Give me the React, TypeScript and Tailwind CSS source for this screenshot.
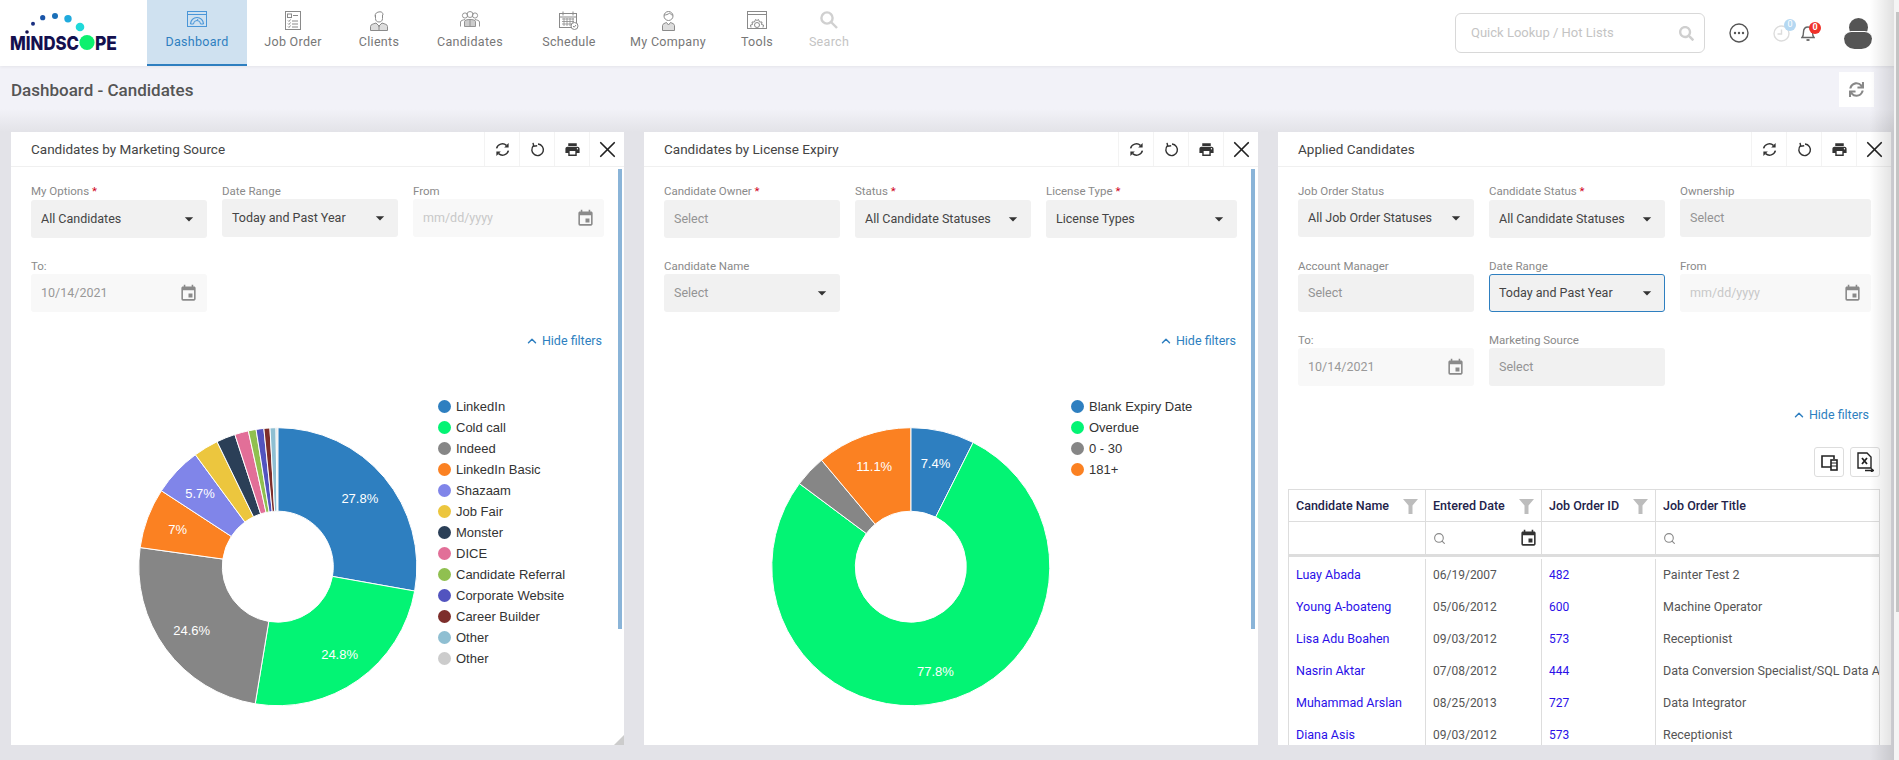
import { MdArrowDropDown, MdEvent, MdPrint } from "react-icons/md";
import { FaSearch, FaSync } from "react-icons/fa";
import { ChevronUp, Search, X } from "lucide-react";

type Slice = { name: string; value: number; color: string; label?: string };

const marketing: Slice[] = [
  { name: "LinkedIn", value: 27.8, color: "#2e7fc0", label: "27.8%" },
  { name: "Cold call", value: 24.8, color: "#03f474", label: "24.8%" },
  { name: "Indeed", value: 24.6, color: "#868686", label: "24.6%" },
  { name: "LinkedIn Basic", value: 7, color: "#fb8122", label: "7%" },
  { name: "Shazaam", value: 5.7, color: "#8085e9", label: "5.7%" },
  { name: "Job Fair", value: 2.9, color: "#ecc63e" },
  { name: "Monster", value: 2.2, color: "#2b3f57" },
  { name: "DICE", value: 1.6, color: "#e26f98" },
  { name: "Candidate Referral", value: 0.9, color: "#90c050" },
  { name: "Corporate Website", value: 0.9, color: "#5254bf" },
  { name: "Career Builder", value: 0.7, color: "#7d2e2b" },
  { name: "Other", value: 0.7, color: "#8fbfd2" },
  { name: "Other", value: 0.2, color: "#cccccc" },
];

const expiry: Slice[] = [
  { name: "Blank Expiry Date", value: 7.4, color: "#2e7fc0", label: "7.4%" },
  { name: "Overdue", value: 77.8, color: "#03f474", label: "77.8%" },
  { name: "0 - 30", value: 3.7, color: "#868686" },
  { name: "181+", value: 11.1, color: "#fb8122", label: "11.1%" },
];

const rows = [
  ["Luay Abada", "06/19/2007", "482", "Painter Test 2"],
  ["Young A-boateng", "05/06/2012", "600", "Machine Operator"],
  ["Lisa Adu Boahen", "09/03/2012", "573", "Receptionist"],
  ["Nasrin Aktar", "07/08/2012", "444", "Data Conversion Specialist/SQL Data Analyst"],
  ["Muhammad Arslan", "08/25/2013", "727", "Data Integrator"],
  ["Diana Asis", "09/03/2012", "573", "Receptionist"],
];

function Donut({ data }: { data: Slice[] }) {
  const cx = 266.8;
  const cy = 206.7;
  const R = 139;
  const r = 55.5;
  const pt = (rad: number, pct: number) => {
    const a = (pct / 100) * Math.PI * 2;
    return [cx + rad * Math.sin(a), cy - rad * Math.cos(a)];
  };
  let start = 0;
  return (
    <svg width="427" height="385" className="shrink-0 font-['Liberation_Sans',sans-serif]">
      {data.map((s, i) => {
        const end = start + s.value;
        const [x1, y1] = pt(R, start);
        const [x2, y2] = pt(R, end);
        const [x3, y3] = pt(r, end);
        const [x4, y4] = pt(r, start);
        const big = s.value > 50 ? 1 : 0;
        const [lx, ly] = pt(107, start + s.value / 2);
        start = end;
        return (
          <g key={i}>
            <path
              d={`M${x1} ${y1}A${R} ${R} 0 ${big} 1 ${x2} ${y2}L${x3} ${y3}A${r} ${r} 0 ${big} 0 ${x4} ${y4}Z`}
              fill={s.color}
              stroke="#fff"
              strokeWidth="1"
            />
            {s.label && (
              <text x={lx} y={ly + 5} textAnchor="middle" fontSize="13" fill="#fff">
                {s.label}
              </text>
            )}
          </g>
        );
      })}
    </svg>
  );
}

function Legend({ data }: { data: Slice[] }) {
  return (
    <div className="mt-[36px] flex flex-col font-['Liberation_Sans',sans-serif] text-[13px] text-[#333]">
      {data.map((s, i) => (
        <div key={i} className="flex h-[21px] items-center gap-[5px] whitespace-nowrap">
          <span className="h-[13px] w-[13px] rounded-full" style={{ backgroundColor: s.color }} />
          {s.name}
        </div>
      ))}
    </div>
  );
}

function SyncIcon() {
  return (
    <svg width="15" height="15" viewBox="0 0 15 15" fill="none" stroke="#333" strokeWidth="1.5">
      <path d="M1.6 6.4A6 6 0 0 1 11.4 3.4" />
      <path d="M13.4 8.6A6 6 0 0 1 3.6 11.6" />
      <path d="M13.6 1V5.4H9.2Z" fill="#333" stroke="none" />
      <path d="M1.4 14V9.6H5.8Z" fill="#333" stroke="none" />
    </svg>
  );
}

function RestartIcon() {
  return (
    <svg width="15" height="15" viewBox="0 0 15 15" fill="none" stroke="#333" strokeWidth="1.4">
      <path d="M8 2A5.8 5.8 0 1 1 3.6 3.6" />
      <path d="M3 0.8L3.8 4.2L7.2 3.8" />
    </svg>
  );
}

function PanelHeader({ title }: { title: string }) {
  return (
    <div className="flex h-[35px] shrink-0 items-center justify-between border-b border-[#f0f0f0] pl-[20px]">
      <span className="pt-[1px] text-[13.5px] text-[#444]">{title}</span>
      <div className="flex h-full">
        <span className="flex w-[35px] items-center justify-center border-l border-[#f3f3f3]"><SyncIcon /></span>
        <span className="flex w-[35px] items-center justify-center border-l border-[#f3f3f3]"><RestartIcon /></span>
        <span className="flex w-[35px] items-center justify-center border-l border-[#f3f3f3] text-[#333]"><MdPrint size={17} /></span>
        <span className="flex w-[35px] items-center justify-center border-l border-[#f3f3f3] text-[#222]"><X size={27} strokeWidth={1.5} /></span>
      </div>
    </div>
  );
}

function Label({ text, required }: { text: string; required?: boolean }) {
  return (
    <div className={required ? "h-[17px] text-[11.5px] leading-[17px] text-[#8a8a8a]" : "h-[16px] text-[11.5px] leading-[17px] text-[#8a8a8a]"}>
      {text}
      {required && <span className="text-[#d0021b]"> *</span>}
    </div>
  );
}

function SelectField({ label, value, required, focus, muted }: { label: string; value: string; required?: boolean; focus?: boolean; muted?: boolean }) {
  return (
    <div>
      <Label text={label} required={required} />
      <div className={focus
        ? "flex h-[38px] items-center justify-between rounded-[3px] border border-[#2e7fc0] bg-[#f1f1f1] pl-[9px] pr-[7px] text-[12.5px] text-[#444]"
        : "flex h-[38px] items-center justify-between rounded-[3px] bg-[#f1f1f1] pl-[10px] pr-[8px] text-[12.5px] text-[#444]"}>
        <span className={muted ? "pt-[1px] text-[#949494]" : "pt-[1px]"}>{value}</span>
        <MdArrowDropDown size={20} className="text-[#333]" />
      </div>
    </div>
  );
}

function MultiField({ label, required }: { label: string; required?: boolean }) {
  return (
    <div>
      <Label text={label} required={required} />
      <div className="flex h-[38px] items-center rounded-[3px] bg-[#f1f1f1] pl-[10px] pt-[1px] text-[12.5px] text-[#949494]">Select</div>
    </div>
  );
}

function DateField({ label, value }: { label: string; value: string }) {
  const empty = value === "mm/dd/yyyy";
  return (
    <div>
      <Label text={label} />
      <div className="flex h-[38px] items-center justify-between rounded-[3px] bg-[#f8f8f8] pl-[10px] pr-[9px] text-[12.5px]">
        <span className={empty ? "pt-[1px] text-[#c8c8c8]" : "pt-[1px] text-[#999]"}>{value}</span>
        <MdEvent size={19} className="text-[#8a8a8a]" />
      </div>
    </div>
  );
}

function HideFilters() {
  return (
    <div className="mt-[20px] flex h-[18px] items-center justify-end gap-[3px] pr-[22px] text-[12.5px] text-[#2e7fc0]">
      <ChevronUp size={14} strokeWidth={2.5} />
      Hide filters
    </div>
  );
}

function Funnel() {
  return (
    <svg width="15" height="15" viewBox="0 0 15 15" className="shrink-0">
      <path d="M0 0H15L9.5 6.5V15H5.5V6.5Z" fill="#bdbdbd" />
    </svg>
  );
}

function CopyIcon() {
  return (
    <svg width="17" height="17" viewBox="0 0 17 17" fill="none" stroke="#222" strokeWidth="1.6">
      <path d="M11 13H1V2H13V5" />
      <rect x="10" y="6" width="6" height="10" fill="#fff" />
      <path d="M10 9H16M10 12H16" strokeWidth="1" />
    </svg>
  );
}

function ExcelIcon() {
  return (
    <svg width="17" height="20" viewBox="0 0 17 20" fill="none" stroke="#222" strokeWidth="1.4">
      <path d="M1 1H10L14 5V16H1Z" />
      <path d="M5 6L10 12M10 6L5 12" strokeWidth="1.8" />
      <path d="M8 18.5H16M14 16.5L16.4 18.5L14 20" strokeWidth="1.4" />
    </svg>
  );
}

function CandidateTable() {
  return (
    <div className="ml-[10px] mt-[12px] w-[592px] overflow-hidden border-x border-t border-[#ddd] text-[12.5px]">
      <div className="grid h-[32px] grid-cols-[136px_116px_114px_226px] border-b border-[#ddd] font-medium text-[#23234a]">
        <div className="flex items-center justify-between pl-[7px] pr-[7px] pt-[1px]">Candidate Name <Funnel /></div>
        <div className="flex items-center justify-between border-l border-[#ddd] pl-[7px] pr-[7px] pt-[1px]">Entered Date <Funnel /></div>
        <div className="flex items-center justify-between border-l border-[#ddd] pl-[7px] pr-[7px] pt-[1px]">Job Order ID <Funnel /></div>
        <div className="flex items-center border-l border-[#ddd] pl-[7px] pt-[1px]">Job Order Title</div>
      </div>
      <div className="grid h-[35px] grid-cols-[136px_116px_114px_226px] border-b-[3px] border-[#ddd] text-[#888]">
        <div />
        <div className="flex items-center justify-between border-l border-[#ddd] pl-[7px] pr-[3px]">
          <Search size={13} strokeWidth={2} />
          <MdEvent size={19} className="text-[#333]" />
        </div>
        <div className="border-l border-[#ddd]" />
        <div className="flex items-center border-l border-[#ddd] pl-[7px]"><Search size={13} strokeWidth={2} /></div>
      </div>
      <div className="pt-[2px]">
        {rows.map((row, i) => (
          <div key={i} className="grid h-[32px] grid-cols-[136px_116px_114px_226px] text-[#555]">
            <div className="flex items-center whitespace-nowrap pl-[7px] text-[#2a10e8]">{row[0]}</div>
            <div className="flex items-center border-l border-[#ddd] pl-[7px] text-[12px]">{row[1]}</div>
            <div className="flex items-center border-l border-[#ddd] pl-[7px] text-[12px] text-[#2a10e8]">{row[2]}</div>
            <div className="flex items-center overflow-hidden whitespace-nowrap border-l border-[#ddd] pl-[7px]">{row[3]}</div>
          </div>
        ))}
      </div>
    </div>
  );
}

function Logo() {
  return (
    <svg width="147" height="66" className="shrink-0 font-['Inter',sans-serif]">
      <circle cx="27" cy="32" r="1.8" fill="#14104f" />
      <circle cx="33" cy="23.7" r="2" fill="#1a2f80" />
      <circle cx="42.7" cy="17.7" r="2.6" fill="#1a55a8" />
      <circle cx="55" cy="16" r="3" fill="#1a6fb8" />
      <circle cx="68" cy="18.7" r="3.7" fill="#20aadd" />
      <circle cx="80" cy="27" r="4.3" fill="#1fd9d9" />
      <text x="10" y="49.5" fontSize="19" fontWeight="800" fill="#14104f" textLength="69" lengthAdjust="spacingAndGlyphs">MINDSC</text>
      <circle cx="87" cy="42.5" r="7.6" fill="#0cf06e" />
      <text x="95" y="49.5" fontSize="19" fontWeight="800" fill="#14104f" textLength="22" lengthAdjust="spacingAndGlyphs">PE</text>
    </svg>
  );
}

function DashboardIcon() {
  return (
    <svg width="20" height="16" viewBox="0 0 20 16" fill="none" stroke="#4a96d8" strokeWidth="1">
      <rect x="0.5" y="0.5" width="19" height="15" />
      <path d="M0.5 3.5H19.5" />
      <path d="M3.5 13A6.5 6.5 0 0 1 16.5 13" strokeWidth="1.2" />
      <path d="M6.5 13A3.5 3.5 0 0 1 13.5 13" />
      <path d="M3.5 13H6.5M13.5 13H16.5M10 9.5L11 8" />
    </svg>
  );
}

function JobOrderIcon() {
  return (
    <svg width="16" height="19" viewBox="0 0 16 19" fill="none" stroke="#8a8a8a" strokeWidth="1">
      <rect x="0.5" y="0.5" width="15" height="18" />
      <rect x="2.5" y="3" width="4" height="3.5" />
      <path d="M8 4.5H13M3 9.5L4 10.5L5.5 8.5M7 10H13M3 12.5L4 13.5L5.5 11.5M7 13H13M3 15.5L4 16.5L5.5 14.5M7 16H13" />
    </svg>
  );
}

function ClientsIcon() {
  return (
    <svg width="18" height="20" viewBox="0 0 18 20" fill="none" stroke="#8a8a8a" strokeWidth="1">
      <path d="M5 5.5C5 2 7 1 10 0.8C12 0.8 13 2 13 4" />
      <path d="M5.5 4V7.5C5.5 10 7.2 11 9 11C10.8 11 12.5 10 12.5 7.5V4" />
      <path d="M0.5 19.5V15.5C0.5 13.5 3 13 6 12L9 15L12 12C15 13 17.5 13.5 17.5 15.5V19.5Z" fill="#ddd" />
      <path d="M9 15V19.5M8 15H10" />
    </svg>
  );
}

function CandidatesIcon() {
  return (
    <svg width="20" height="16" viewBox="0 0 20 16" fill="none" stroke="#8a8a8a" strokeWidth="0.9">
      <circle cx="5" cy="4.5" r="2.6" />
      <circle cx="15" cy="4.5" r="2.6" />
      <circle cx="10" cy="3.5" r="3" />
      <path d="M0.5 15.5V11C0.5 9.5 3 9 5 8.5M19.5 15.5V11C19.5 9.5 17 9 15 8.5" />
      <path d="M4.5 15.5V10.5C4.5 9 7.5 8.5 10 8.5C12.5 8.5 15.5 9 15.5 10.5V15.5Z" fill="#ccc" />
      <path d="M10 8.5V15.5" />
    </svg>
  );
}

function ScheduleIcon() {
  return (
    <svg width="20" height="19" viewBox="0 0 20 19" fill="none" stroke="#8a8a8a" strokeWidth="1">
      <rect x="0.5" y="2.5" width="17" height="14" />
      <path d="M4 0.5V4.5M14 0.5V4.5M0.5 6H17.5" />
      <path d="M3 8H15M3 10.5H15M3 13H15M5 7V15M8 7V15M11 7V15M14 7V15" strokeWidth="0.8" />
      <circle cx="15.5" cy="15" r="3.5" fill="#fff" />
      <path d="M14 15L15.2 16.2L17 14" />
    </svg>
  );
}

function CompanyIcon() {
  return (
    <svg width="13" height="20" viewBox="0 0 13 20" fill="none" stroke="#8a8a8a" strokeWidth="1">
      <circle cx="6.5" cy="5" r="4.5" />
      <path d="M2 4C4 4 6 3.5 7.5 2C8.5 3.5 10 4 11 4" />
      <path d="M0.5 19.5V14.5C0.5 13 3 12 4.5 11.5L6.5 14L8.5 11.5C10 12 12.5 13 12.5 14.5V19.5Z" fill="#ddd" />
    </svg>
  );
}

function ToolsIcon() {
  return (
    <svg width="20" height="18" viewBox="0 0 20 18" fill="none" stroke="#8a8a8a" strokeWidth="1">
      <rect x="0.5" y="0.5" width="19" height="17" />
      <path d="M0.5 3.5H19.5" />
      <path d="M4 16.5L3.5 14L5.5 13.5L5 11L7.5 11L8.5 8.5L10 9.5L11.5 8.5L12.5 11L15 11L14.5 13.5L16.5 14L16 16.5" />
      <circle cx="10" cy="14" r="2.5" />
    </svg>
  );
}

function SearchNavIcon() {
  return (
    <svg width="18" height="18" viewBox="0 0 18 18" fill="none" stroke="#d0d0d0" strokeWidth="2.4">
      <circle cx="7" cy="7" r="5.6" />
      <path d="M11 11L17 17" />
    </svg>
  );
}

function MoreIcon() {
  return (
    <svg width="20" height="20" viewBox="0 0 20 20" fill="none">
      <circle cx="10" cy="10" r="9" stroke="#555" strokeWidth="1.4" />
      <circle cx="6" cy="10" r="1.2" fill="#555" />
      <circle cx="10" cy="10" r="1.2" fill="#555" />
      <circle cx="14" cy="10" r="1.2" fill="#555" />
    </svg>
  );
}

function ClockIcon() {
  return (
    <svg width="17" height="17" viewBox="0 0 17 17" fill="none" stroke="#dcdcdc" strokeWidth="1.4">
      <circle cx="8.5" cy="8.5" r="7.5" />
      <path d="M8.5 4.5V9H4.5" />
    </svg>
  );
}

function BellIcon() {
  return (
    <svg width="14" height="18" viewBox="0 0 14 18" fill="none" stroke="#666" strokeWidth="1.4">
      <path d="M1 13.5C2.5 12 2.5 10 2.5 8C2.5 4.8 4.5 3 7 3C9.5 3 11.5 4.8 11.5 8C11.5 10 11.5 12 13 13.5Z" />
      <path d="M5.5 16H8.5" strokeWidth="1.8" />
    </svg>
  );
}

const nav = [
  { label: "Dashboard", icon: <DashboardIcon />, cls: "w-[100px] border-b-2 border-[#2e7fc0] bg-[#cfe1f0] text-[#2e7fc0]" },
  { label: "Job Order", icon: <JobOrderIcon />, cls: "w-[92px] text-[#777]" },
  { label: "Clients", icon: <ClientsIcon />, cls: "w-[80px] text-[#777]" },
  { label: "Candidates", icon: <CandidatesIcon />, cls: "w-[102px] text-[#777]" },
  { label: "Schedule", icon: <ScheduleIcon />, cls: "w-[96px] text-[#777]" },
  { label: "My Company", icon: <CompanyIcon />, cls: "w-[102px] text-[#777]" },
  { label: "Tools", icon: <ToolsIcon />, cls: "w-[76px] text-[#777]" },
  { label: "Search", icon: <SearchNavIcon />, cls: "w-[68px] text-[#c4c4c4]" },
];

export default function App() {
  return (
    <div className="relative flex h-[760px] flex-col overflow-hidden bg-[#e3e3e8] font-['Roboto',sans-serif]">
      <header className="relative z-10 flex h-[66px] shrink-0 bg-white shadow-[0_1px_3px_rgba(0,0,0,0.06)]">
        <Logo />
        {nav.map((n) => (
          <div key={n.label} className={`flex h-[66px] flex-col items-center ${n.cls}`}>
            <div className="flex h-[35px] items-start pt-[11px]">{n.icon}</div>
            <div className="text-[12.5px] leading-[14px] tracking-[0.3px]">{n.label}</div>
          </div>
        ))}
        <div className="ml-auto mr-[27px] flex items-center">
          <div className="flex h-[40px] w-[250px] items-center justify-between rounded-[6px] border border-[#d8d8d8] pl-[15px] pr-[10px] text-[13px] text-[#c4c4c4]">
            Quick Lookup / Hot Lists
            <FaSearch size={15} className="text-[#cfcfcf]" />
          </div>
          <div className="ml-[24px]"><MoreIcon /></div>
          <div className="relative ml-[24px]">
            <ClockIcon />
            <span className="absolute -right-[6px] -top-[6px] flex h-[12px] w-[12px] items-center justify-center rounded-full bg-[#b5d8f2] text-[9px] text-white">0</span>
          </div>
          <div className="relative ml-[11px]">
            <BellIcon />
            <span className="absolute -right-[6px] -top-[2px] flex h-[12px] w-[12px] items-center justify-center rounded-full bg-[#f0322a] text-[9px] font-bold text-white">0</span>
          </div>
          <div className="ml-[29px] flex w-[28px] flex-col items-center">
            <span className="h-[19px] w-[19px] rounded-full bg-[#555]" />
            <span className="-mt-[6px] h-[18px] w-[28px] rounded-b-[14px] rounded-t-[10px] border-t border-white bg-[#555]" />
          </div>
        </div>
      </header>

      <div className="flex h-[66px] shrink-0 items-start justify-between bg-[linear-gradient(to_bottom,#f2f2f8_65%,#e3e3e8)] pl-[11px] pr-[25px]">
        <h1 className="mt-[15px] text-[17px] font-medium leading-[18px] text-[#555]">Dashboard - Candidates</h1>
        <div className="mt-[6px] flex h-[35px] w-[35px] items-center justify-center bg-white text-[#888]">
          <FaSync size={15} />
        </div>
      </div>

      <main className="flex min-h-0 flex-1 gap-[20px] pl-[11px]">
        <section className="relative flex h-[613px] w-[613px] shrink-0 flex-col overflow-hidden bg-white">
          <PanelHeader title="Candidates by Marketing Source" />
          <div className="grid grid-cols-[176px_176px_191px] gap-x-[15px] gap-y-[20px] pl-[20px] pt-[16px]">
            <SelectField label="My Options" value="All Candidates" required />
            <SelectField label="Date Range" value="Today and Past Year" />
            <DateField label="From" value="mm/dd/yyyy" />
            <DateField label="To:" value="10/14/2021" />
          </div>
          <HideFilters />
          <div className="mt-[10px] flex">
            <Donut data={marketing} />
            <Legend data={marketing} />
          </div>
          <span className="absolute right-[2px] top-[37px] h-[460px] w-[4px] bg-[#8ab4d8]" />
          <svg width="10" height="10" className="absolute bottom-0 right-0"><path d="M10 0V10H0Z" fill="#ccc" /></svg>
        </section>

        <section className="relative flex h-[613px] w-[614px] shrink-0 flex-col overflow-hidden bg-white">
          <PanelHeader title="Candidates by License Expiry" />
          <div className="grid grid-cols-[176px_176px_191px] gap-x-[15px] gap-y-[20px] pl-[20px] pt-[16px]">
            <MultiField label="Candidate Owner" required />
            <SelectField label="Status" value="All Candidate Statuses" required />
            <SelectField label="License Type" value="License Types" required />
            <SelectField label="Candidate Name" value="Select" muted />
          </div>
          <HideFilters />
          <div className="mt-[10px] flex">
            <Donut data={expiry} />
            <Legend data={expiry} />
          </div>
          <span className="absolute right-[3px] top-[37px] h-[460px] w-[4px] bg-[#8ab4d8]" />
        </section>

        <section className="relative flex h-[613px] w-[613px] shrink-0 flex-col overflow-hidden bg-white">
          <PanelHeader title="Applied Candidates" />
          <div className="grid grid-cols-[176px_176px_191px] gap-x-[15px] gap-y-[20px] pl-[20px] pt-[16px]">
            <SelectField label="Job Order Status" value="All Job Order Statuses" />
            <SelectField label="Candidate Status" value="All Candidate Statuses" required />
            <MultiField label="Ownership" />
            <MultiField label="Account Manager" />
            <SelectField label="Date Range" value="Today and Past Year" focus />
            <DateField label="From" value="mm/dd/yyyy" />
            <DateField label="To:" value="10/14/2021" />
            <MultiField label="Marketing Source" />
          </div>
          <HideFilters />
          <div className="mt-[23px] flex justify-end gap-[6px] pr-[11px]">
            <span className="flex h-[30px] w-[30px] items-center justify-center rounded-[3px] border border-[#ddd]"><CopyIcon /></span>
            <span className="flex h-[30px] w-[30px] items-center justify-center rounded-[3px] border border-[#ddd]"><ExcelIcon /></span>
          </div>
          <CandidateTable />
        </section>
      </main>

      <div className="pointer-events-none absolute bottom-0 right-[5px] top-0 z-20 w-[24px] bg-[linear-gradient(to_right,transparent,rgba(0,0,0,0.12))]" />
      <div className="absolute bottom-0 right-0 top-0 z-20 w-[5px] bg-[#f4f4f4]">
        <div className="ml-[2px] mt-[12px] h-[600px] w-[3px] bg-[#c4c4c4]" />
      </div>
    </div>
  );
}
